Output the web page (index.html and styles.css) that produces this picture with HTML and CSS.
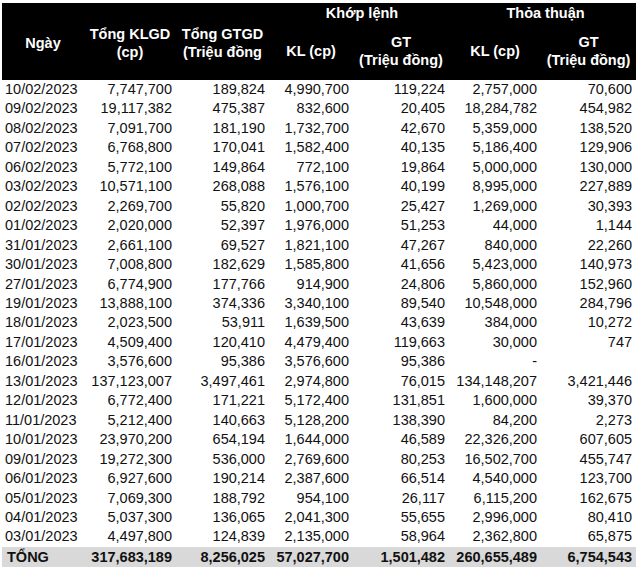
FILE: index.html
```html
<!DOCTYPE html>
<html lang="vi">
<head>
<meta charset="utf-8">
<title>Thống kê giao dịch</title>
<link rel="stylesheet" href="styles.css">
</head>
<body>
<table class="stats">
  <colgroup>
    <col class="c1"><col class="c2"><col class="c3"><col class="c4"><col class="c5"><col class="c6"><col class="c7">
  </colgroup>
  <thead>
    <tr class="h1">
      <th rowspan="2">Ngày</th>
      <th rowspan="2">Tổng KLGD<br>(cp)</th>
      <th rowspan="2">Tổng GTGD<br>(Triệu đồng</th>
      <th colspan="2" class="grp grp-a">Khớp lệnh</th>
      <th colspan="2" class="grp grp-b">Thỏa thuận</th>
    </tr>
    <tr class="h2">
      <th>KL (cp)</th>
      <th>GT<br>(Triệu đồng)</th>
      <th>KL (cp)</th>
      <th>GT<br>(Triệu đồng)</th>
    </tr>
  </thead>
  <tbody>
    <tr><td>10/02/2023</td><td>7,747,700</td><td>189,824</td><td>4,990,700</td><td>119,224</td><td>2,757,000</td><td>70,600</td></tr>
    <tr><td>09/02/2023</td><td>19,117,382</td><td>475,387</td><td>832,600</td><td>20,405</td><td>18,284,782</td><td>454,982</td></tr>
    <tr><td>08/02/2023</td><td>7,091,700</td><td>181,190</td><td>1,732,700</td><td>42,670</td><td>5,359,000</td><td>138,520</td></tr>
    <tr><td>07/02/2023</td><td>6,768,800</td><td>170,041</td><td>1,582,400</td><td>40,135</td><td>5,186,400</td><td>129,906</td></tr>
    <tr><td>06/02/2023</td><td>5,772,100</td><td>149,864</td><td>772,100</td><td>19,864</td><td>5,000,000</td><td>130,000</td></tr>
    <tr><td>03/02/2023</td><td>10,571,100</td><td>268,088</td><td>1,576,100</td><td>40,199</td><td>8,995,000</td><td>227,889</td></tr>
    <tr><td>02/02/2023</td><td>2,269,700</td><td>55,820</td><td>1,000,700</td><td>25,427</td><td>1,269,000</td><td>30,393</td></tr>
    <tr><td>01/02/2023</td><td>2,020,000</td><td>52,397</td><td>1,976,000</td><td>51,253</td><td>44,000</td><td>1,144</td></tr>
    <tr><td>31/01/2023</td><td>2,661,100</td><td>69,527</td><td>1,821,100</td><td>47,267</td><td>840,000</td><td>22,260</td></tr>
    <tr><td>30/01/2023</td><td>7,008,800</td><td>182,629</td><td>1,585,800</td><td>41,656</td><td>5,423,000</td><td>140,973</td></tr>
    <tr><td>27/01/2023</td><td>6,774,900</td><td>177,766</td><td>914,900</td><td>24,806</td><td>5,860,000</td><td>152,960</td></tr>
    <tr><td>19/01/2023</td><td>13,888,100</td><td>374,336</td><td>3,340,100</td><td>89,540</td><td>10,548,000</td><td>284,796</td></tr>
    <tr><td>18/01/2023</td><td>2,023,500</td><td>53,911</td><td>1,639,500</td><td>43,639</td><td>384,000</td><td>10,272</td></tr>
    <tr><td>17/01/2023</td><td>4,509,400</td><td>120,410</td><td>4,479,400</td><td>119,663</td><td>30,000</td><td>747</td></tr>
    <tr><td>16/01/2023</td><td>3,576,600</td><td>95,386</td><td>3,576,600</td><td>95,386</td><td class="dash">-</td><td></td></tr>
    <tr><td>13/01/2023</td><td>137,123,007</td><td>3,497,461</td><td>2,974,800</td><td>76,015</td><td>134,148,207</td><td>3,421,446</td></tr>
    <tr><td>12/01/2023</td><td>6,772,400</td><td>171,221</td><td>5,172,400</td><td>131,851</td><td>1,600,000</td><td>39,370</td></tr>
    <tr><td>11/01/2023</td><td>5,212,400</td><td>140,663</td><td>5,128,200</td><td>138,390</td><td>84,200</td><td>2,273</td></tr>
    <tr><td>10/01/2023</td><td>23,970,200</td><td>654,194</td><td>1,644,000</td><td>46,589</td><td>22,326,200</td><td>607,605</td></tr>
    <tr><td>09/01/2023</td><td>19,272,300</td><td>536,000</td><td>2,769,600</td><td>80,253</td><td>16,502,700</td><td>455,747</td></tr>
    <tr><td>06/01/2023</td><td>6,927,600</td><td>190,214</td><td>2,387,600</td><td>66,514</td><td>4,540,000</td><td>123,700</td></tr>
    <tr><td>05/01/2023</td><td>7,069,300</td><td>188,792</td><td>954,100</td><td>26,117</td><td>6,115,200</td><td>162,675</td></tr>
    <tr><td>04/01/2023</td><td>5,037,300</td><td>136,065</td><td>2,041,300</td><td>55,655</td><td>2,996,000</td><td>80,410</td></tr>
    <tr><td>03/01/2023</td><td>4,497,800</td><td>124,839</td><td>2,135,000</td><td>58,964</td><td>2,362,800</td><td>65,875</td></tr>
  </tbody>
  <tfoot>
    <tr class="total"><td>TỔNG</td><td>317,683,189</td><td>8,256,025</td><td>57,027,700</td><td>1,501,482</td><td>260,655,489</td><td>6,754,543</td></tr>
  </tfoot>
</table>
</body>
</html>
```

FILE: styles.css
```css
html, body {
  margin: 0;
  padding: 0;
  background: #ffffff;
}

body {
  padding: 3px 0 0 2px;
  font-family: "Liberation Sans", Arial, sans-serif;
  font-size: 14.5px;
  color: #111111;
}

.stats {
  border-collapse: collapse;
  border-spacing: 0;
  table-layout: fixed;
  width: 634px;
}

.c1 { width: 82px; }
.c2 { width: 92px; }
.c3 { width: 93px; }
.c4 { width: 84px; }
.c5 { width: 96px; }
.c6 { width: 92px; }
.c7 { width: 95px; }

.stats th {
  background: #000000;
  color: #ffffff;
  font-weight: bold;
  text-align: center;
  vertical-align: middle;
  line-height: 18px;
  padding: 0;
  white-space: nowrap;
}

.stats .h1 { height: 19px; }
.stats .h2 { height: 58px; }

.stats .h1 th[rowspan] { padding-top: 2px; }

.stats .grp { vertical-align: middle; }
.stats .grp-a { padding-left: 6px; }
.stats .grp-b { padding-left: 6px; }

.stats td {
  padding: 0 4px 0 0;
  text-align: right;
  line-height: 19.45px;
  height: 19.45px;
  white-space: nowrap;
}

.stats td:first-child {
  text-align: left;
  padding-left: 3px;
}

.stats td.dash {
  padding-right: 4px;
}

.stats .total td {
  background: #d9d9d9;
  font-weight: bold;
  height: 20px;
  line-height: 20px;
  color: #111111;
}

.stats .total td:first-child {
  padding-left: 5px;
}
```
